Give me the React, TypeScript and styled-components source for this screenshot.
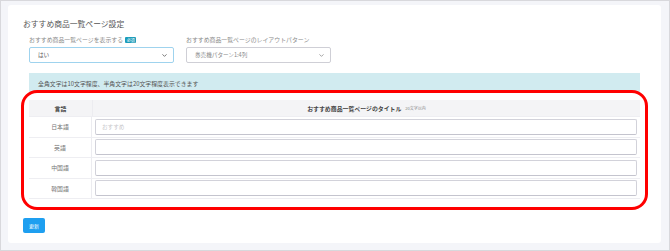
import React from 'react';
import styled, { createGlobalStyle } from 'styled-components';
import { ChevronDown } from 'lucide-react';

const GlobalStyle = createGlobalStyle`
  html, body {
    margin: 0;
    padding: 0;
    background: #f4f5f9;
  }
  * {
    box-sizing: border-box;
  }
  body {
    font-family: "Noto Sans CJK JP", "Noto Sans", sans-serif;
  }
`;

const LANGUAGES = ['日本語', '英語', '中国語', '韓国語'];

const Frame = styled.div`
  width: 670px;
  height: 251px;
  border: 1px solid #d8d8dc;
  padding: 4px 8px 7px 7px;
  background: #f4f5f9;
`;

const Card = styled.div`
  height: 100%;
  background: #fff;
  border-radius: 3px;
  padding: 13px 21px 0 21px;
`;

const Title = styled.h2`
  margin: 0 0 0 -6px;
  font-size: 7.8px;
  line-height: 12px;
  font-weight: 400;
  color: #555;
`;

const FieldRow = styled.div`
  display: flex;
  gap: 12px;
  margin-top: 5px;
`;

const Field = styled.div`
  display: flex;
  flex-direction: column;
  width: 145px;
`;

const Label = styled.div`
  display: flex;
  align-items: center;
  gap: 2px;
  height: 9px;
  font-size: 5.9px;
  color: #8a8a8a;
  margin-bottom: 3px;
`;

const Badge = styled.span`
  display: inline-block;
  background: #1c9cba;
  color: #fff;
  font-size: 4px;
  line-height: 6px;
  padding: 0 1.5px;
  border-radius: 1px;
`;

const Select = styled.div<{ $active?: boolean }>`
  display: flex;
  align-items: center;
  justify-content: space-between;
  height: 16px;
  padding: 0 5px 0 8px;
  border: 1px solid ${(p) => (p.$active ? '#9fd3ee' : '#cfcfd6')};
  border-radius: 2px;
  font-size: 5.6px;
  color: ${(p) => (p.$active ? '#555' : '#888')};
  svg {
    color: #666;
  }
`;

const Info = styled.div`
  margin-top: 10px;
  height: 20px;
  padding: 0 9px;
  display: flex;
  align-items: center;
  background: #d1ebf0;
  font-size: 5.9px;
  color: #555;
`;

const TableWrap = styled.div`
  position: relative;
  margin-top: 7px;
  &::after {
    content: '';
    position: absolute;
    inset: -10px -8px -11px -8px;
    border: 3px solid #ff0000;
    border-radius: 16px;
    pointer-events: none;
  }
`;

const Table = styled.div`
  display: grid;
  grid-template-columns: 63px 1fr;
  border-bottom: 1px solid #eeeef2;
`;

const HeadCell = styled.div`
  height: 16px;
  display: flex;
  align-items: center;
  justify-content: center;
  gap: 4px;
  background: #f4f4f6;
  font-size: 5.9px;
  font-weight: 700;
  color: #444;
  & + & {
    border-left: 1px solid #ececf0;
  }
`;

const Note = styled.span`
  font-size: 4px;
  font-weight: 400;
  color: #888;
`;

const LangCell = styled.div`
  height: 20.5px;
  display: flex;
  align-items: center;
  justify-content: center;
  border-top: 1px solid #eeeef2;
  border-right: 1px solid #ececf0;
  font-size: 5.9px;
  color: #777;
`;

const InputCell = styled.div`
  height: 20.5px;
  display: flex;
  align-items: center;
  padding: 0 3px;
  border-top: 1px solid #eeeef2;
`;

const TextInput = styled.input`
  width: 100%;
  height: 16px;
  border: 1px solid #d2d2da;
  border-bottom-color: #c4c4ce;
  border-radius: 2px;
  padding: 0 6px;
  font-family: inherit;
  font-size: 5.6px;
  color: #555;
  outline: none;
  &::placeholder {
    color: #c8c8cc;
  }
`;

const SaveButton = styled.button`
  margin: 19px 0 0 -6px;
  width: 22px;
  height: 15px;
  border: none;
  border-radius: 2px;
  background: #1e9ff0;
  color: #fff;
  font-family: inherit;
  font-size: 5px;
  padding: 0;
`;

const App: React.FC = () => {
  return (
    <>
      <GlobalStyle />
      <Frame>
        <Card>
          <Title>おすすめ商品一覧ページ設定</Title>
          <FieldRow>
            <Field>
              <Label>
                おすすめ商品一覧ページを表示する<Badge>必須</Badge>
              </Label>
              <Select $active>
                はい
                <ChevronDown size={7} strokeWidth={3} />
              </Select>
            </Field>
            <Field>
              <Label>おすすめ商品一覧ページのレイアウトパターン</Label>
              <Select>
                券売機パターン1:4列
                <ChevronDown size={7} strokeWidth={2} />
              </Select>
            </Field>
          </FieldRow>
          <Info>全角文字は10文字程度、半角文字は20文字程度表示できます</Info>
          <TableWrap>
            <Table>
              <HeadCell>言語</HeadCell>
              <HeadCell>
                おすすめ商品一覧ページのタイトル<Note>20文字以内</Note>
              </HeadCell>
              {LANGUAGES.map((lang, i) => (
                <React.Fragment key={lang}>
                  <LangCell>{lang}</LangCell>
                  <InputCell>
                    <TextInput placeholder={i === 0 ? 'おすすめ' : ''} />
                  </InputCell>
                </React.Fragment>
              ))}
            </Table>
          </TableWrap>
          <SaveButton>更新</SaveButton>
        </Card>
      </Frame>
    </>
  );
};

export default App;
